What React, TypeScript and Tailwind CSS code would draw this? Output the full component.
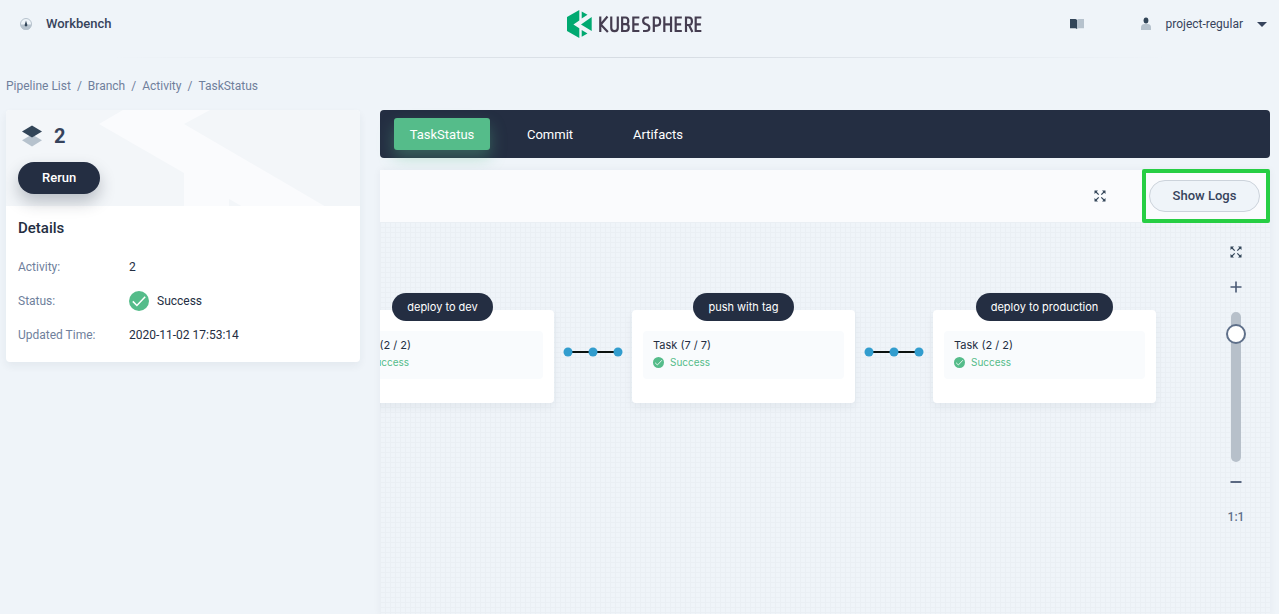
import { useState } from "react";

const crumbs = ["Pipeline List", "Branch", "Activity", "TaskStatus"];

const stages = [
  { name: "deploy to dev", count: "2 / 2" },
  { name: "push with tag", count: "7 / 7" },
  { name: "deploy to production", count: "2 / 2" },
];

function SuccessIcon({ className }: { className: string }) {
  return (
    <svg viewBox="0 0 20 20" className={className} aria-hidden="true">
      <circle cx="10" cy="10" r="10" fill="#55bc8a" />
      <path d="M3.8 10.4l4.1 4.1 8.3-8.7" fill="none" stroke="#fff" strokeWidth="1.5" />
    </svg>
  );
}

function ExpandIcon() {
  return (
    <svg viewBox="0 0 12 12" className="size-3" aria-hidden="true">
      <path
        d="M0.5 0.5h3.5L0.5 4zM11.5 0.5v3.5L8 0.5zM0.5 11.5V8L4 11.5zM11.5 11.5H8L11.5 8z"
        fill="#324558"
      />
      <path
        d="M1.5 1.5l3.2 3.2M10.5 1.5L7.3 4.7M1.5 10.5l3.2-3.2M10.5 10.5L7.3 7.3"
        stroke="#324558"
        strokeWidth="1.2"
      />
    </svg>
  );
}

function Logo() {
  return (
    <svg viewBox="0 0 136 30" className="h-[30px] w-[136px]" role="img" aria-label="KubeSphere">
      <path
        d="M12.3 1v10.4L6.4 15.4l5.9 3.9V29L0 22V8zM14.7 2.4L20.5 5.7l-5.8 3.9zM24.7 8v14L14 15.4zM14.7 21l5.8 3.5-5.8 3.3z"
        fill="#00a971"
      />
      <g transform="translate(-0.3 0) scale(0.99 1)" fill="none" stroke="#453d50" strokeWidth="2.2">
        <path d="M33.9 7.500v15.500M41.2 7.500l-6.8 8L41.6 23" />
        <path d="M45 7.500v11.500q0 3.100 3.300 3.100T51.600 19V7.500" />
        <path d="M56 8.500h3.400q2.800 0 2.800 3.400T59.400 15.200H56h3.700q3 0 3 3.400T59.700 22H56V7.500" />
        <path d="M73.400 8.500H67.300v13.500h6.100M67.300 15.300h5.500" />
        <path d="M83 8.500h-2.500q-3.300 0-3.300 3.400 0 2.400 3 3.300 3.300 1 3.300 3.500 0 3.300-3.400 3.300h-3" />
        <path d="M88 23V8.500h3.100q3.300 0 3.300 4.100T91.100 16.700H88" />
        <path d="M98.600 7.500v15.500M105.400 7.500v15.500M98.600 15.300h6.800" />
        <path d="M116.300 8.500h-6.200v13.500h6.200M110.100 15.300h5.500" />
        <path d="M120.500 23V8.500h3q3 0 3 3.800t-3 3.700h-3M123.500 16l3.500 7" />
        <path d="M136 8.500h-5.700v13.500h5.700M130.300 15.300h5.200" />
      </g>
    </svg>
  );
}

function Connector() {
  return (
    <svg viewBox="0 0 78 10" className="mt-[37px] h-[10px] w-[78px] shrink-0" aria-hidden="true">
      <path d="M14 5h50" stroke="#0b1210" strokeWidth="2" />
      <g fill="#329dce">
        <circle cx="14" cy="5" r="4.5" />
        <circle cx="39" cy="5" r="4.5" />
        <circle cx="64" cy="5" r="4.5" />
      </g>
    </svg>
  );
}

function Stage({ name, count }: { name: string; count: string }) {
  return (
    <article className="flex h-[93px] w-[223px] shrink-0 flex-col rounded bg-white px-[11px] shadow-[0_4px_8px_rgba(36,46,66,0.06)]">
      <h3 className="-mt-[17px] self-center rounded-full bg-[#242e42] px-[15px] text-[11px] leading-7 text-white">
        {name}
      </h3>
      <div className="mt-[10px] h-12 rounded bg-[#f9fbfd] px-[10px] pt-[5px] text-[11px]">
        <p className="leading-[18px] text-[#242e42]">Task ({count})</p>
        <p className="flex items-center gap-[6px] text-[10px] leading-4 text-[#55bc8a]">
          <SuccessIcon className="size-[11px]" />
          Success
        </p>
      </div>
    </article>
  );
}

export default function App() {
  const [tab, setTab] = useState("TaskStatus");
  const [zoom, setZoom] = useState(91);

  return (
    <div className="flex min-h-screen flex-col bg-[#eff4f9] font-['Roboto',sans-serif] text-xs text-[#242e42]">
      <header className="grid h-[57px] grid-cols-[1fr_auto_1fr] items-start pr-[9px]">
        <a href="#workbench" className="flex items-center gap-[14px] pt-[14px] pl-5 leading-5 font-medium text-[#36435c]">
          <svg viewBox="0 0 12 12" className="size-3" aria-hidden="true">
            <circle cx="6" cy="6" r="5.500" fill="#eff4f9" stroke="#b6c2cd" />
            <path d="M0.500 6.500h11a5.500 5.500 0 0 1-11 0z" fill="#b6c2cd" />
            <path d="M6 2.500L7.400 7a1.400 1.400 0 1 1-2.800 0z" fill="#324558" />
          </svg>
          <span className="text-[13px]">Workbench</span>
        </a>
        <a href="#home" className="pt-[9px]">
          <Logo />
        </a>
        <div className="flex items-center justify-end pt-[14px] pr-[3px]">
          <a href="#docs" aria-label="Documentation">
            <svg viewBox="0 0 14 10" className="h-[10px] w-[14px]" aria-hidden="true">
              <path d="M0 0h5.500L7 0.800V10L5.500 9.300H0z" fill="#324558" />
              <path d="M14 0H8.500L7 0.800V10l1.500-0.700H14z" fill="#b6c2cd" />
            </svg>
          </a>
          <button type="button" className="ml-14 flex items-center leading-5 text-[#36435c]">
            <svg viewBox="0 0 12 14" className="mr-[14px] h-[14px] w-3" aria-hidden="true">
              <path d="M1 13v-2.500Q1 7 4.500 7h3Q11 7 11 10.500V13z" fill="#b6c2cd" />
              <ellipse cx="6" cy="3.500" rx="2.400" ry="2.900" fill="#324558" />
            </svg>
            project-regular
            <svg viewBox="0 0 10 5" className="ml-[14px] h-[5px] w-[10px]" aria-hidden="true">
              <path d="M0 0h10L5 5z" fill="#36435c" />
            </svg>
          </button>
        </div>
      </header>
      <div className="mx-[110px] h-px bg-linear-to-r from-transparent via-[#d5dbe2] to-transparent" />

      <nav aria-label="Breadcrumb" className="px-[6px] pt-[18px] leading-5 text-[#6f7f9c]">
        <ol className="flex">
          {crumbs.map((crumb, i) => (
            <li key={crumb}>
              {i > 0 && <span className="px-[6px]">/</span>}
              <a href={"#" + crumb.toLowerCase().replace(" ", "-")}>{crumb}</a>
            </li>
          ))}
        </ol>
      </nav>

      <div className="flex grow items-start gap-5 pt-[14px] pr-[9px] pl-[6px]">
        <aside className="w-[354px] shrink-0 overflow-hidden rounded bg-white shadow-[0_4px_8px_rgba(36,46,66,0.06)]">
          <div className="relative h-24 bg-[#f3f6f9] px-3 pt-[14px]">
            <svg viewBox="0 0 354 96" className="absolute inset-0 h-24 w-[354px]" aria-hidden="true">
              <path d="M117 0L93 14 178 63v33h140.500L178 14 204 0zM223 89v7h12.500z" fill="#fafbfd" fillRule="evenodd" />
            </svg>
            <div className="relative flex h-6 items-center gap-3 pl-1">
              <svg viewBox="0 0 20 22" className="h-[22px] w-5" aria-hidden="true">
                <path d="M10 9.500L20 15.300 10 21.500 0 15.300z" fill="#b6c2cd" />
                <path d="M10 0.500L20 6.500 10 12.500 0 6.500z" fill="#324558" />
              </svg>
              <h1 className="text-xl leading-6 font-bold text-[#36435c]">2</h1>
            </div>
            <button
              type="button"
              className="relative mt-[14px] h-8 rounded-full bg-[#242e42] px-6 text-[13px] font-medium text-white shadow-[0_8px_16px_rgba(36,46,66,0.28)]"
            >
              Rerun
            </button>
          </div>
          <div className="px-3 pt-3 pb-[17px]">
            <h2 className="text-[15px] leading-5 font-medium">Details</h2>
            <dl className="mt-[19px] grid grid-cols-[111px_1fr] gap-y-[14px] leading-5 text-[#242e42]">
              <dt className="text-[#6f7f9c]">Activity:</dt>
              <dd>2</dd>
              <dt className="text-[#6f7f9c]">Status:</dt>
              <dd className="flex items-center gap-2">
                <SuccessIcon className="size-5" />
                Success
              </dd>
              <dt className="text-[#6f7f9c]">Updated Time:</dt>
              <dd>2020-11-02 17:53:14</dd>
            </dl>
          </div>
        </aside>

        <main className="flex min-w-0 grow flex-col self-stretch">
          <nav className="flex h-12 items-center gap-3 rounded bg-[#242e42] px-[14px]">
            {["TaskStatus", "Commit", "Artifacts"].map((name) => (
              <button
                key={name}
                type="button"
                onClick={() => setTab(name)}
                className={
                  tab === name
                    ? "h-8 w-24 rounded-[3px] bg-[#55bc8a] pt-px text-[13px] text-white shadow-[0_8px_16px_rgba(85,188,138,0.36)]"
                    : "h-8 w-24 rounded-[3px] pt-px text-[13px] text-white"
                }
              >
                {name}
              </button>
            ))}
          </nav>

          <section className="mt-3 flex grow flex-col shadow-[0_0_8px_rgba(36,46,66,0.05)]">
            <div className="relative z-10 flex h-[52px] items-center justify-end bg-[#fafbfd]">
              <button type="button" aria-label="Full screen" className="mr-9">
                <ExpandIcon />
              </button>
              <div className="flex h-[54px] w-32 items-center justify-end rounded-xs border-4 border-[#27ce44] pr-[6px]">
                <button
                  type="button"
                  className="h-8 w-[111px] rounded-full border border-[#ccd3db] bg-[#eff4f9] text-[13px] font-medium text-[#36435c]"
                >
                  Show Logs
                </button>
              </div>
            </div>

            <div className="relative flex grow items-start overflow-hidden bg-[linear-gradient(#eaeff4_1px,transparent_1px),linear-gradient(90deg,#eaeff4_1px,transparent_1px)] bg-size-[5px_5px] font-['Inter',sans-serif]">
              <div className="-ml-[49px] flex items-start pt-[88px]">
                {stages.map((stage, i) => (
                  <div key={stage.name} className="flex items-start">
                    {i > 0 && <Connector />}
                    <Stage {...stage} />
                  </div>
                ))}
              </div>
              <div className="absolute top-6 right-[22px] flex w-6 flex-col items-center font-['Roboto',sans-serif] text-[#5f708a]">
                <button type="button" aria-label="Fit view">
                  <ExpandIcon />
                </button>
                <button type="button" aria-label="Zoom in" className="mt-[23px]">
                  <svg viewBox="0 0 12 12" className="size-3" aria-hidden="true">
                    <path d="M0.500 6h11M6 0.500v11" stroke="#4a5974" strokeWidth="1.600" />
                  </svg>
                </button>
                <input
                  type="range"
                  aria-label="Zoom level"
                  value={zoom}
                  onChange={(e) => setZoom(Number(e.target.value))}
                  className="mt-[19px] h-[150px] w-5 appearance-none bg-transparent [direction:rtl] [writing-mode:vertical-lr] [&::-webkit-slider-runnable-track]:w-[10px] [&::-webkit-slider-runnable-track]:rounded-full [&::-webkit-slider-runnable-track]:bg-[#b7c0ca] [&::-webkit-slider-thumb]:-ml-[5px] [&::-webkit-slider-thumb]:size-5 [&::-webkit-slider-thumb]:appearance-none [&::-webkit-slider-thumb]:rounded-full [&::-webkit-slider-thumb]:border-2 [&::-webkit-slider-thumb]:border-[#5f708a] [&::-webkit-slider-thumb]:bg-white"
                />
                <button type="button" aria-label="Zoom out" className="mt-[14px]">
                  <svg viewBox="0 0 12 12" className="size-3" aria-hidden="true">
                    <path d="M0.500 6h11" stroke="#4a5974" strokeWidth="1.800" />
                  </svg>
                </button>
                <button type="button" className="mt-[19px] leading-5 font-medium">
                  1:1
                </button>
              </div>
            </div>
          </section>
        </main>
      </div>
    </div>
  );
}
